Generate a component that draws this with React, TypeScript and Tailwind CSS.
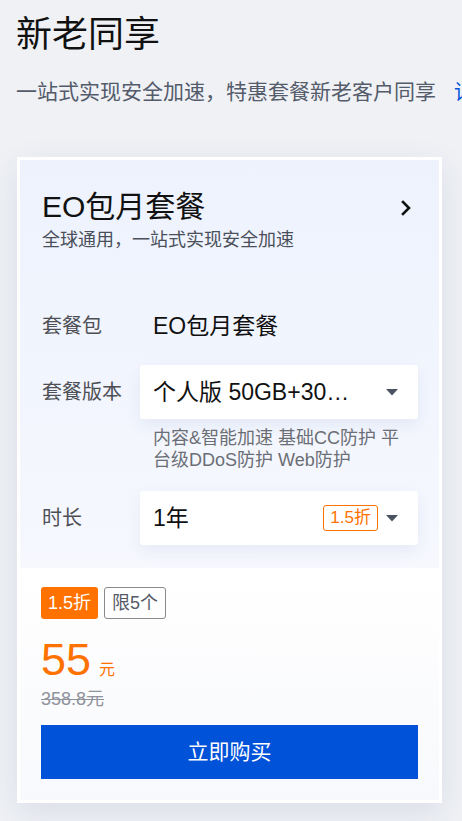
const FONT = '"Liberation Sans", "Noto Sans CJK SC", sans-serif'

function Caret() {
  return (
    <svg width="12" height="7" viewBox="0 0 12 7" className="shrink-0">
      <path d="M0 0 L12 0 L6 6.5 Z" fill="#4b5262" />
    </svg>
  )
}

function Chevron() {
  return (
    <svg width="12" height="18" viewBox="0 0 12 18">
      <path d="M3 3 L9 9 L3 15" fill="none" stroke="#111" strokeWidth="2.6" strokeLinecap="square" />
    </svg>
  )
}

interface SelectBoxProps {
  value: string
  badge?: string
}

function SelectBox({ value, badge }: SelectBoxProps) {
  return (
    <div className="flex-1 min-w-0 h-[54px] bg-white rounded-[3px] shadow-[0_6px_16px_rgba(30,60,140,0.07)] flex items-center pl-[13px] pr-[20px]">
      <span className="flex-1 min-w-0 whitespace-nowrap text-[23px] text-[#111]">{value}</span>
      {badge && (
        <span className="ml-2 h-[26px] px-[6px] flex items-center border border-[#ff7200] rounded-[3px] text-[17px] text-[#ff7200]">
          {badge}
        </span>
      )}
      <span className="ml-[8px] flex items-center">
        <Caret />
      </span>
    </div>
  )
}

export default function App() {
  return (
    <div className="w-[462px] h-[821px] overflow-hidden bg-[#eff1f5]" style={{ fontFamily: FONT }}>
      <div className="pl-[16px] pt-[10px]">
        <h1 className="text-[36px] leading-[50px] text-[#111] font-normal">新老同享</h1>
        <p className="mt-[17px] text-[21px] leading-[30px] text-[#545b6b] whitespace-nowrap">
          一站式实现安全加速，特惠套餐新老客户同享
          <span className="ml-[18px] text-[#0052d9]">详情</span>
        </p>
      </div>

      <div className="mt-[50px] ml-[17px] w-[425px] border-[3px] border-white bg-white shadow-[0_10px_30px_rgba(40,60,110,0.10)]">
        <div className="bg-gradient-to-b from-[#edf2fd] to-[#f6f8fe] pt-[27px] pl-[22px] pr-[21px] pb-[23px]">
          <div className="flex items-center justify-between">
            <div className="text-[30px] leading-[40px] text-[#111]">EO包月套餐</div>
            <div className="mr-[6px] mt-[2px]">
              <Chevron />
            </div>
          </div>
          <div className="text-[18px] leading-[26px] text-[#4a4f5a]">全球通用，一站式实现安全加速</div>

          <div className="mt-[46px] flex items-center h-[54px]">
            <div className="w-[98px] text-[20px] text-[#4d4f55]">套餐包</div>
            <div className="pl-[13px] text-[23px] text-[#111]">EO包月套餐</div>
          </div>

          <div className="mt-[12px] flex items-center">
            <div className="w-[98px] text-[20px] text-[#4d4f55]">套餐版本</div>
            <SelectBox value="个人版 50GB+30…" />
          </div>
          <div className="mt-[8px] pl-[111px] pr-[2px] text-[18px] leading-[22px] text-[#6b6e75]">
            内容&amp;智能加速 基础CC防护 平台级DDoS防护 Web防护
          </div>

          <div className="mt-[20px] flex items-center">
            <div className="w-[98px] text-[20px] text-[#4d4f55]">时长</div>
            <SelectBox value="1年" badge="1.5折" />
          </div>
        </div>

        <div className="bg-gradient-to-b from-white to-[#f8f9fc] pt-[19px] pl-[21px] pr-[21px] pb-[21px]">
          <div className="flex gap-[6px]">
            <span className="h-[32px] px-[7px] flex items-center bg-[#ff7200] rounded-[3px] text-[18px] text-white">1.5折</span>
            <span className="h-[32px] px-[7px] flex items-center border border-[#8a8a8a] rounded-[3px] text-[18px] text-[#555a66]">限5个</span>
          </div>
          <div className="mt-[18px] flex items-baseline text-[#ff7200]">
            <span className="text-[45px] leading-[45px]">55</span>
            <span className="ml-[8px] text-[16px]">元</span>
          </div>
          <div className="mt-[5px] text-[18px] leading-[24px] text-[#8f939c] line-through">358.8元</div>
          <button className="mt-[14px] w-full h-[54px] bg-[#0052d9] text-white text-[21px]">立即购买</button>
        </div>
      </div>
    </div>
  )
}
